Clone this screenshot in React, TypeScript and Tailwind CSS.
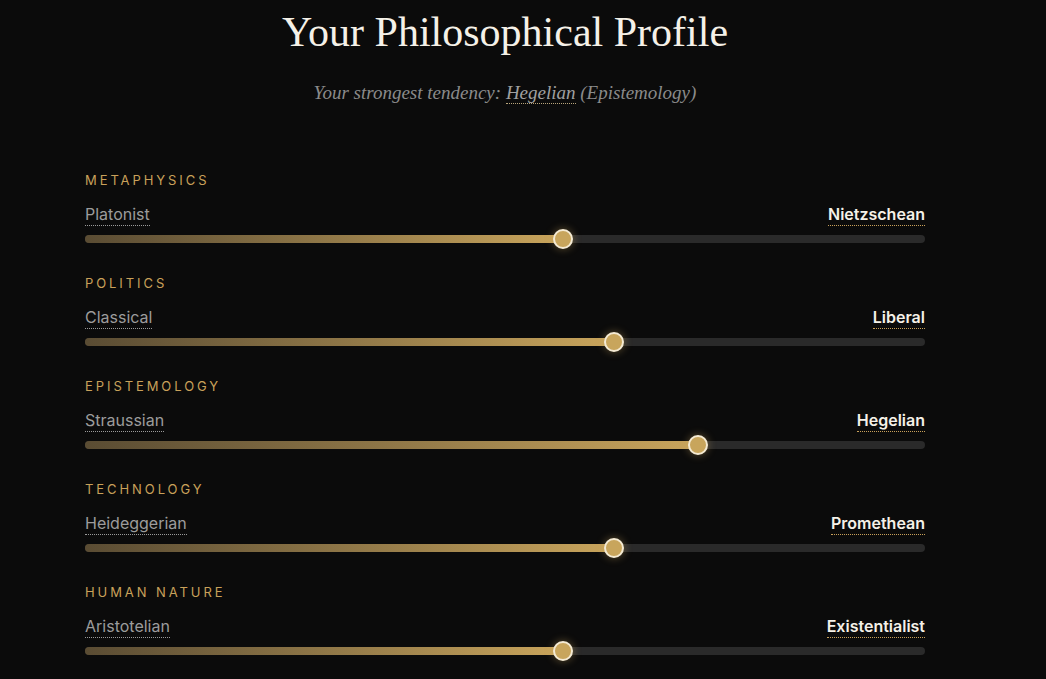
import React from 'react'

type Axis = {
  category: string
  left: string
  right: string
  value: number
}

const axes: Axis[] = [
  { category: 'Metaphysics', left: 'Platonist', right: 'Nietzschean', value: 56.9 },
  { category: 'Politics', left: 'Classical', right: 'Liberal', value: 63 },
  { category: 'Epistemology', left: 'Straussian', right: 'Hegelian', value: 73 },
  { category: 'Technology', left: 'Heideggerian', right: 'Promethean', value: 63 },
  { category: 'Human Nature', left: 'Aristotelian', right: 'Existentialist', value: 56.9 },
]

const AxisRow = ({ axis }: { axis: Axis }) => {
  return (
    <div className="mb-[32px]">
      <div className="text-[13px] leading-[16px] uppercase tracking-[0.225em] text-[#c9a15a]">
        {axis.category}
      </div>

      <div className="mt-4 flex items-end justify-between text-[16px] leading-[20px]">
        <span className="border-b border-dotted border-[#9a9a9a] pb-[1px] text-[#9c9c9c]">
          {axis.left}
        </span>
        <span className="border-b border-dotted border-[#c9a15a] pb-[1px] font-semibold text-[#f5f1e8]">
          {axis.right}
        </span>
      </div>

      <div className="relative mt-[9px] h-2 rounded-full bg-[#2a2a2a]">
        <div
          className="h-full rounded-full bg-gradient-to-r from-[#5a4c33] to-[#c9a55c]"
          style={{ width: `${axis.value}%` }}
        />
        <div
          className="absolute top-1/2 h-5 w-5 -translate-x-1/2 -translate-y-1/2 rounded-full border-2 border-[#f4ead3] bg-[#c8a55c] shadow-[0_0_8px_rgba(201,165,92,0.45)]"
          style={{ left: `${axis.value}%` }}
        />
      </div>
    </div>
  )
}

const App = () => {
  return (
    <div className="min-h-screen bg-[#0b0b0b] font-['Inter',sans-serif]">
      <div className="ml-[85px] w-[840px] pt-[7px]">
        <h1 className="text-center font-['Liberation_Serif',serif] text-[42px] leading-[50px] text-[#f5f1e8]">
          Your Philosophical Profile
        </h1>
        <p className="mt-[23px] text-center font-['Liberation_Serif',serif] text-[19px] italic leading-[26px] text-[#8a8a8a]">
          Your strongest tendency:{' '}
          <span className="border-b border-dotted border-[#b8a47a] text-[#a0a0a0]">Hegelian</span>{' '}
          (Epistemology)
        </p>

        <div className="mt-[66px]">
          {axes.map((axis) => (
            <AxisRow key={axis.category} axis={axis} />
          ))}
        </div>
      </div>
    </div>
  )
}

export default App
